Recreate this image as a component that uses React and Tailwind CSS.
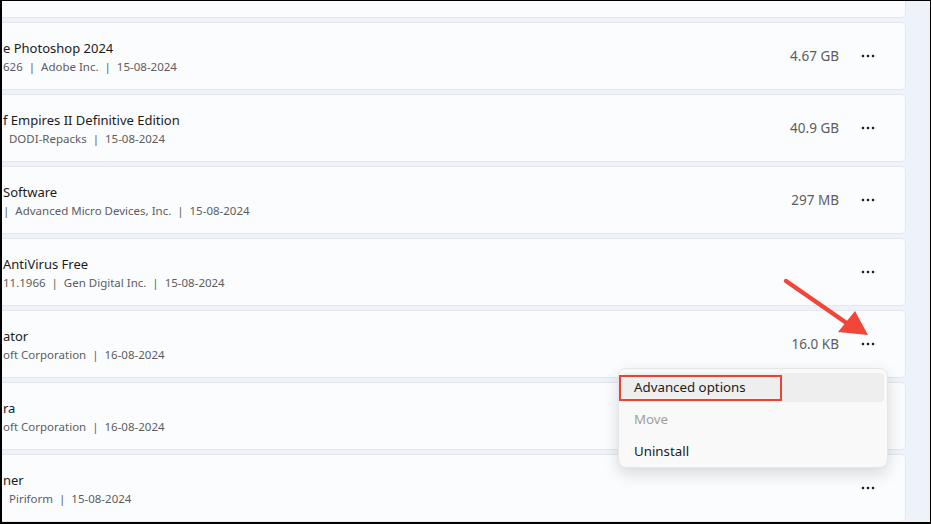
import React from 'react';

const apps = [
  { name: '', meta: '', size: '' },
  { name: 'e Photoshop 2024', meta: '626  |  Adobe Inc.  |  15-08-2024', size: '4.67 GB' },
  { name: 'f Empires II Definitive Edition', meta: '  DODI-Repacks  |  15-08-2024', size: '40.9 GB' },
  { name: 'Software', meta: '|  Advanced Micro Devices, Inc.  |  15-08-2024', size: '297 MB' },
  { name: 'AntiVirus Free', meta: '11.1966  |  Gen Digital Inc.  |  15-08-2024', size: '' },
  { name: 'ator', meta: 'oft Corporation  |  16-08-2024', size: '16.0 KB' },
  { name: 'ra', meta: 'oft Corporation  |  16-08-2024', size: '' },
  { name: 'ner', meta: '  Piriform  |  15-08-2024', size: '' },
];

const Dots = () => (
  <svg width="14" height="4" viewBox="0 0 14 4" className="text-[#1b1b1b]">
    <circle cx="2" cy="2" r="1.3" fill="currentColor" />
    <circle cx="7" cy="2" r="1.3" fill="currentColor" />
    <circle cx="12" cy="2" r="1.3" fill="currentColor" />
  </svg>
);

export default function App() {
  return (
    <div
      className="relative w-[931px] h-[524px] bg-black pl-[2px] pt-[1px] pr-[1px] pb-[2px] overflow-hidden"
      style={{ fontFamily: '"Noto Sans", "Open Sans", sans-serif' }}
    >
      <div className="w-full h-full bg-[#eef2f9] overflow-hidden">
        <div className="flex flex-col gap-[4px] mt-[-51px] pr-[24px]">
          {apps.map((app, i) => (
            <div
              key={i}
              className="h-[68px] shrink-0 flex items-center bg-[#fbfcfe] border border-l-0 border-[#e4e8ee] rounded-r-[5px] pr-[21px]"
            >
              <div className="flex-1 min-w-0 pt-[1px] pl-[1px]">
                <div className="text-[13px] leading-[20px] text-[#1b1b1b] whitespace-pre">{app.name}</div>
                <div className="text-[11.5px] leading-[17px] text-[#5d5d5d] whitespace-pre">{app.meta}</div>
              </div>
              <div className="text-[13.5px] text-[#5d5d5d] mr-[13px]">{app.size}</div>
              <div className="w-[32px] h-[32px] flex items-center justify-center">
                <Dots />
              </div>
            </div>
          ))}
        </div>
      </div>

      {/* context menu */}
      <div className="absolute left-[618px] top-[368px] w-[270px] h-[100px] bg-[#f9f9f9] rounded-[8px] border border-[#e6e6e6] shadow-[0_6px_16px_rgba(0,0,0,0.14)] pt-[4px] px-[3px] text-[13.3px]">
        <div className="h-[29px] rounded-[4px] bg-[#eeeeee] flex items-center pl-[12px] text-[#1b1b1b]">
          Advanced options
        </div>
        <div className="h-[33px] flex items-center pl-[12px] pt-[3px] text-[#a0a0a0]">Move</div>
        <div className="h-[33px] flex items-center pl-[12px] text-[#1b1b1b]">Uninstall</div>
      </div>
      <div className="absolute left-[619px] top-[375px] w-[163px] h-[26px] border-2 border-[#ea4335]" />

      {/* annotation arrow */}
      <svg className="absolute left-0 top-0" width="931" height="524">
        <line x1="786" y1="281" x2="848" y2="324" stroke="#f2463a" strokeWidth="4.5" strokeLinecap="round" />
        <polygon points="868,335 838,332 855,311" fill="#f2463a" />
      </svg>
    </div>
  );
}
